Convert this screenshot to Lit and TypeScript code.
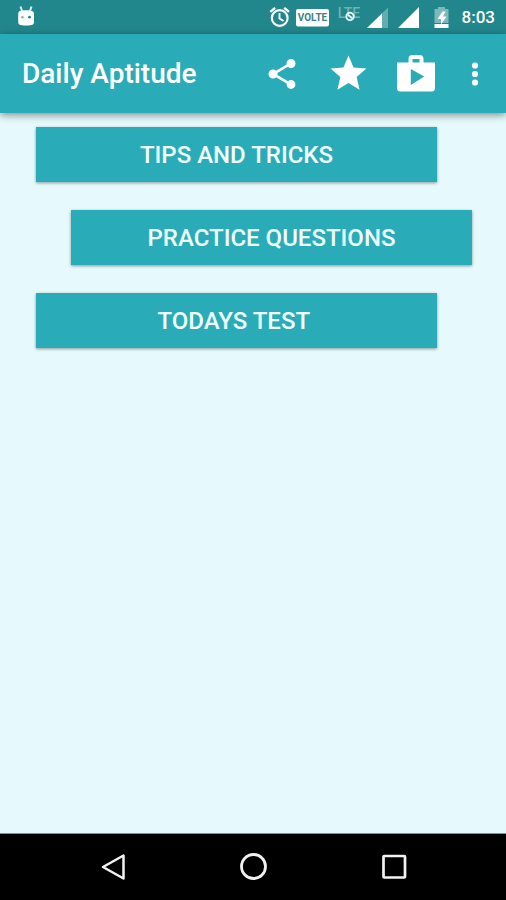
import { LitElement, html, css, svg } from "lit";
import { customElement } from "lit/decorators.js";

const icons = {
  share: svg`<svg width="36" height="36" viewBox="0 0 24 24" fill="currentColor"><path d="M18 16.080c-.76 0-1.440.3-1.960.77L8.910 12.700c.05-.23.09-.46.09-.7s-.04-.47-.09-.7l7.050-4.110c.54.5 1.250.81 2.040.81 1.660 0 3-1.340 3-3s-1.340-3-3-3-3 1.340-3 3c0 .24.04.47.09.7L8.040 9.810C7.500 9.310 6.790 9 6 9c-1.660 0-3 1.340-3 3s1.340 3 3 3c.79 0 1.500-.31 2.040-.81l7.120 4.160c-.05.21-.08.43-.08.65 0 1.610 1.310 2.920 2.920 2.920s2.920-1.310 2.920-2.920-1.310-2.920-2.920-2.920z"/></svg>`,
  star: svg`<svg width="43" height="43" viewBox="0 0 24 24" fill="currentColor"><path d="M12 17.270 18.180 21l-1.640-7.030L22 9.240l-7.190-.61L12 2 9.190 8.630 2 9.240l5.460 4.730L5.820 21z"/></svg>`,
  shop: svg`<svg width="40" height="40" viewBox="0 0 40 40" fill="currentColor"><path fill-rule="evenodd" d="M12.500 8.500V5a4 4 0 0 1 4-4h7a4 4 0 0 1 4 4V8.500H39v25.500a3.500 3.500 0 0 1-3.500 3.500H4.500A3.500 3.500 0 0 1 1 34V8.500zM16.500 8.500h7V5h-7zM14.800 15v16L28.200 22.500z"/></svg>`,
  more: svg`<svg width="8" height="28" viewBox="0 0 8 28" fill="currentColor"><circle cx="4" cy="5.500" r="3.100"/><circle cx="4" cy="14" r="3.100"/><circle cx="4" cy="22.500" r="3.100"/></svg>`,
  bot: svg`<svg width="18" height="34" viewBox="17 0 18 34"><path d="M20.500 6.500 22 11M31.500 6.500 30 11" stroke="#d5eeee" stroke-width="2"/><path d="M18.200 14C18.200 11 20.500 10.300 26 10.300s8 .7 8 3.700V22c0 2.500-1.500 3.500-8 3.500s-7.800-1-7.800-3.500z" fill="#fff"/><circle cx="22.500" cy="17.200" r="1.300" fill="#8fb9aa"/><circle cx="29.500" cy="17.200" r="1.400" fill="#22878c"/></svg>`,
  alarm: svg`<svg width="27" height="34" viewBox="266 0 27 34" fill="none" stroke="#fff"><circle cx="279.700" cy="18" r="7.900" stroke-width="2.200"/><path d="M279.500 13v5.500l4 2.500" stroke-width="1.900"/><path d="m270.300 11.800 4.800-4M289 11.800l-4.800-4" stroke-width="2.400"/></svg>`,
  volte: svg`<svg width="40" height="34" viewBox="293 0 40 34"><rect x="296" y="9" width="33" height="17.500" rx="2" fill="#fff"/><text class="tag" x="312.500" y="21" text-anchor="middle" fill="#3c8388">VOLTE</text></svg>`,
  lte: svg`<svg width="31" height="34" viewBox="333 0 31 34"><text class="net" x="349" y="18" text-anchor="middle" fill="#6fb3b6">LTE</text><circle cx="350" cy="16.500" r="3.700" fill="#22878c" stroke="#e4f5f5" stroke-width="2"/><path d="m347.500 14.500 5 4" stroke="#e4f5f5" stroke-width="2"/></svg>`,
  signalLow: svg`<svg width="31" height="34" viewBox="364 0 31 34"><path d="M388 7.500V28H367z" fill="#65abaf"/><path d="M382 13.400V28H367z" fill="#fff"/></svg>`,
  signalFull: svg`<svg width="33" height="34" viewBox="395 0 33 34"><path d="M419 7V28H398z" fill="#fff"/></svg>`,
  battery: svg`<svg width="27" height="34" viewBox="428 0 27 34"><path d="M438 7h7v2h3.500v14H434.500V9h3.500z" fill="#7bb9bc"/><path d="M434.500 24h14v4h-14z" fill="#fff"/><path d="M442.500 11.500 437.500 19h3.500v5.500l5.500-8h-3.700l3-5z" fill="#fff"/></svg>`,
  back: svg`<svg width="28" height="28" viewBox="0 0 28 28" fill="none" stroke="#f2f2f2" stroke-width="2.500" stroke-linejoin="round"><path d="M24.500 2.500v23L4 14z"/></svg>`,
  home: svg`<svg width="28" height="28" viewBox="0 0 28 28" fill="none" stroke="#f2f2f2" stroke-width="2.800"><circle cx="14.500" cy="13.500" r="12"/></svg>`,
  recent: svg`<svg width="28" height="28" viewBox="0 0 28 28" fill="none" stroke="#f2f2f2" stroke-width="2.700"><rect x="4.500" y="3" width="21.500" height="21.500" rx=".8"/></svg>`,
};

@customElement("status-bar")
class StatusBar extends LitElement {
  static styles = css`
    :host {
      display: flex;
      align-items: center;
      justify-content: space-between;
      height: 34px;
      padding: 0 11px 0 17px;
      background: #22878c;
      color: #fff;
    }
    .group { display: flex; align-items: center; }
    svg { display: block; }
    .tag { font: 700 10px Roboto, sans-serif; }
    .net { font: 500 14px Roboto, sans-serif; }
    .clock { margin-left: 7px; font: 500 17px/34px Roboto, sans-serif; }
  `;
  render() {
    return html`
      <div class="group">${icons.bot}</div>
      <div class="group">
        ${icons.alarm}${icons.volte}${icons.lte}${icons.signalLow}${icons.signalFull}${icons.battery}
        <span class="clock">8:03</span>
      </div>
    `;
  }
}

@customElement("app-bar")
class AppBar extends LitElement {
  static styles = css`
    :host {
      display: flex;
      align-items: center;
      height: 79px;
      padding: 0 5px 0 22px;
      background: #2aacb8;
      color: #fff;
      box-shadow: 0 2px 8px rgba(0, 0, 0, 0.45);
      position: relative;
    }
    .title { flex: 1; margin: 0; font: 500 28px/36px Roboto, sans-serif; white-space: nowrap; }
    .action {
      display: grid;
      place-items: center;
      width: 67px;
      height: 56px;
      padding: 0;
      border: 0;
      background: none;
      color: inherit;
    }
    .menu { width: 52px; }
  `;
  render() {
    return html`
      <h1 class="title">Daily Aptitude</h1>
      <button class="action" aria-label="Share">${icons.share}</button>
      <button class="action" aria-label="Rate">${icons.star}</button>
      <button class="action" aria-label="More apps">${icons.shop}</button>
      <button class="action menu" aria-label="Menu">${icons.more}</button>
    `;
  }
}

@customElement("nav-bar")
class NavBar extends LitElement {
  static styles = css`
    :host {
      display: grid;
      grid-template-columns: repeat(3, 1fr);
      height: 66px;
      padding: 0 43px;
      background: #000;
      border-top: 1px solid #7f9092;
    }
    .key {
      display: grid;
      place-items: center;
      padding: 0;
      border: 0;
      background: none;
    }
  `;
  render() {
    return html`
      <button class="key" aria-label="Back">${icons.back}</button>
      <button class="key" aria-label="Home">${icons.home}</button>
      <button class="key" aria-label="Recent apps">${icons.recent}</button>
    `;
  }
}

@customElement("app-root")
class AppRoot extends LitElement {
  static styles = css`
    :host {
      display: flex;
      flex-direction: column;
      min-height: 100vh;
      background: #e6fafd;
    }
    .options {
      flex: 1;
      display: flex;
      flex-direction: column;
      gap: 28px;
      padding: 14px 34px 28px 36px;
    }
    .option {
      height: 55px;
      margin: 0 35px 0 0;
      padding: 0;
      border: 0;
      background: #2aacb8;
      color: #f0feff;
      font: 500 24px/32px Roboto, sans-serif;
      white-space: pre;
      box-shadow: 0 1px 3px rgba(0, 0, 0, 0.4);
    }
    .shifted { margin: 0 0 0 35px; }
  `;
  render() {
    return html`
      <status-bar></status-bar>
      <app-bar></app-bar>
      <main class="options">
        <button class="option">TIPS AND TRICKS</button>
        <button class="option shifted">PRACTICE QUESTIONS</button>
        <button class="option">TODAYS TEST </button>
      </main>
      <nav-bar></nav-bar>
    `;
  }
}
